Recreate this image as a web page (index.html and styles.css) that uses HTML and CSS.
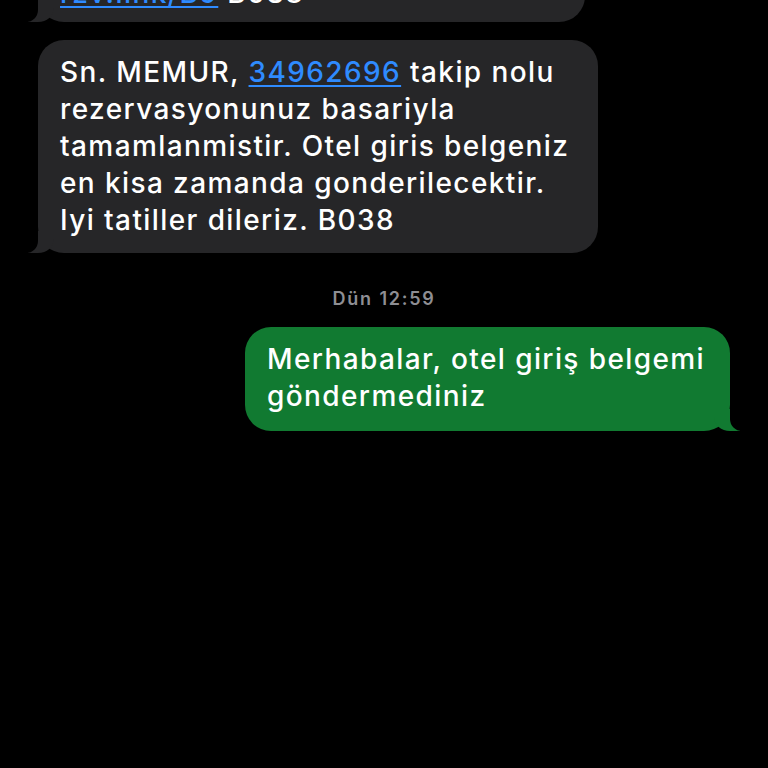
FILE: index.html
```html
<!DOCTYPE html>
<html lang="tr">
<head>
<meta charset="utf-8">
<title>Mesajlar</title>
<link rel="stylesheet" href="styles.css">
</head>
<body>
<main class="thread">
  <div class="bubble incoming first">Rezervasyon detaylari icin:<br><a class="link" href="#">rzv.link/B9</a> B038</div>
  <div class="bubble incoming second">Sn. MEMUR, <a class="link" href="#">34962696</a> takip nolu<br>rezervasyonunuz basariyla<br>tamamlanmistir. Otel giris belgeniz<br>en kisa zamanda gonderilecektir.<br>Iyi tatiller dileriz. B038</div>
  <div class="stamp"><span class="day">Dün</span> <span class="time">12:59</span></div>
  <div class="bubble outgoing">Merhabalar, otel giriş belgemi<br>göndermediniz</div>
</main>
</body>
</html>
```
FILE: styles.css
```css
html, body {
  margin: 0;
  padding: 0;
  background: #000;
  height: 100%;
  overflow: hidden;
}
body {
  font-family: Inter, "Noto Sans", "Liberation Sans", sans-serif;
  color: #fff;
}
.thread {
  display: flex;
  flex-direction: column;
  padding: 0 38px;
}
.bubble {
  position: relative;
  box-sizing: border-box;
  font-size: 28px;
  font-weight: 500;
  letter-spacing: 1.4px;
  line-height: 37px;
  border-radius: 26px;
  padding: 14px 22px 14px 22px;
  white-space: nowrap;
}
.incoming {
  background: #262628;
  align-self: flex-start;
}
.first {
  width: 547px;
  margin-top: -76px;
  padding-bottom: 10px;
}
.second {
  width: 560px;
  margin-top: 18px;
}
.outgoing {
  background: #117a31;
  align-self: flex-end;
  width: 485px;
  padding: 14px 22px 16px 22px;
}
.link {
  color: #2f8bff;
  text-decoration: underline;
  text-decoration-thickness: 2px;
  text-underline-offset: 3px;
}
.incoming::before,
.incoming::after,
.outgoing::before,
.outgoing::after {
  content: "";
  position: absolute;
  bottom: 0;
  height: 22px;
}
.incoming::before {
  left: -10px;
  width: 26px;
  background: #262628;
  border-bottom-right-radius: 16px 14px;
}
.incoming::after {
  left: -30px;
  width: 30px;
  background: #000;
  border-bottom-right-radius: 12px;
}
.outgoing::before {
  right: -10px;
  width: 26px;
  background: #117a31;
  border-bottom-left-radius: 16px 14px;
}
.outgoing::after {
  right: -30px;
  width: 30px;
  background: #000;
  border-bottom-left-radius: 12px;
}
.stamp {
  align-self: center;
  margin: 36px 0 18px;
  font-size: 18px;
  letter-spacing: 1.7px;
  line-height: 20px;
  color: #8e8e93;
}
.day {
  font-weight: 600;
}
.time {
  font-weight: 600;
}
```
